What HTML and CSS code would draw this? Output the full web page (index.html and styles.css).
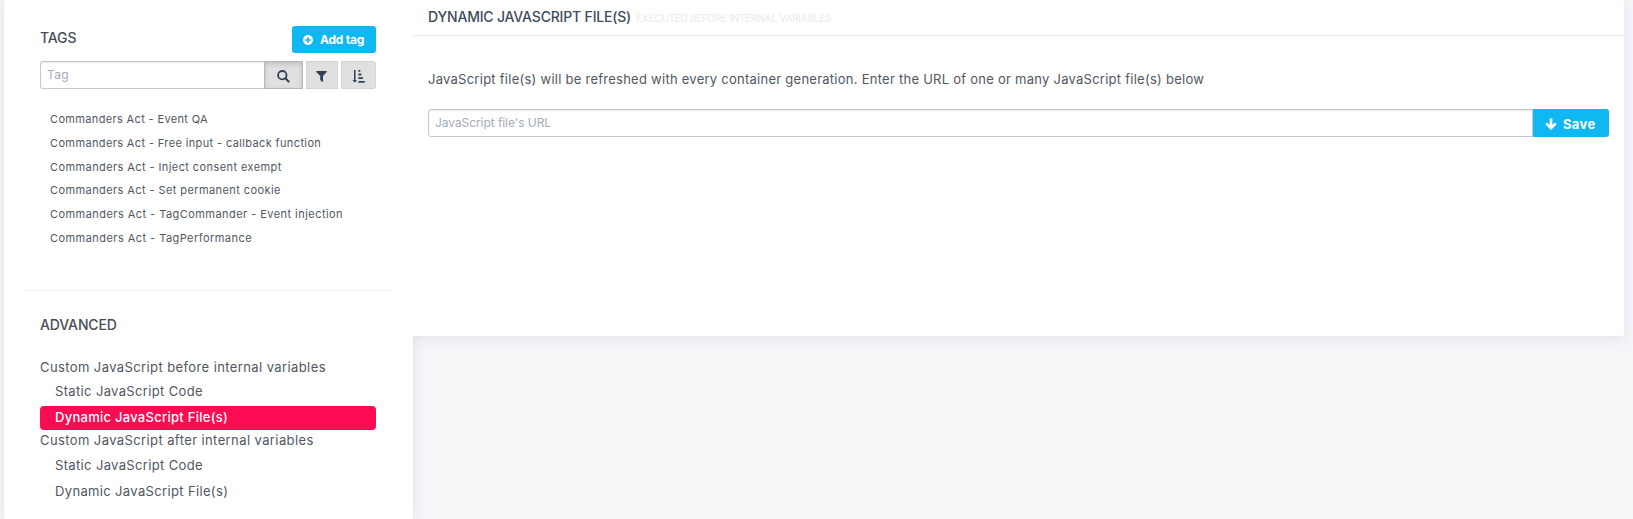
FILE: index.html
```
<!DOCTYPE html>
<html lang="en">
<head>
<meta charset="utf-8">
<title>Dynamic JavaScript File(s)</title>
<link rel="stylesheet" href="styles.css">
</head>
<body>
<div class="layout">
  <aside class="sidebar">
    <section class="tags">
      <div class="tags-head">
        <h2 class="heading">TAGS</h2>
        <button class="btn add-btn">
          <svg class="add-icon" viewBox="0 0 10 10" width="10" height="10"><circle cx="5" cy="5" r="5" fill="#fff"/><path d="M5 2.2v5.6M2.2 5h5.6" stroke="#10b8f2" stroke-width="1.7"/></svg>
          <span>Add tag</span>
        </button>
      </div>
      <div class="search-row">
        <div class="field tag-field"><span>Tag</span></div>
        <button class="tool tool-active">
          <svg viewBox="0 0 13 13" width="13" height="13" fill="none" stroke="#2f4259"><circle cx="5.3" cy="5.2" r="4.2" stroke-width="1.8"/><path d="M8.4 8.3l3.2 3.3" stroke-width="2.1" stroke-linecap="round"/></svg>
        </button>
        <button class="tool tool-filter">
          <svg viewBox="0 0 11 11" width="11" height="11" fill="#2f4259"><path d="M.6 0h9.8q.7.3.3 1L7 4.9v5.4q-.2.8-.9.4L4.2 9V4.9L.3 1Q-.1.3.6 0z"/></svg>
        </button>
        <button class="tool tool-sort">
          <svg viewBox="0 0 13 13" width="13" height="13" fill="#2f4259"><path d="M2 0h1.5v10H5L2.750 12.8.5 10H2zM6.400 0h1.900v1.700H6.400zM6.400 3.600h3v1.800h-3zM6.400 7.300h4.600v1.800H6.400zM6.400 11h6.400v1.800H6.400z"/></svg>
        </button>
      </div>
      <ul class="tag-list">
        <li class="l1">Commanders Act - Event QA</li>
        <li class="l2">Commanders Act - Free input - callback function</li>
        <li class="l3">Commanders Act - Inject consent exempt</li>
        <li class="l3">Commanders Act - Set permanent cookie</li>
        <li class="l4">Commanders Act - TagCommander - Event injection</li>
        <li class="l4">Commanders Act - TagPerformance</li>
      </ul>
    </section>
    <section class="advanced">
      <h2 class="heading">ADVANCED</h2>
      <nav class="tree">
        <div class="group">Custom JavaScript before internal variables</div>
        <div class="leaf">Static JavaScript Code</div>
        <div class="leaf selected">Dynamic JavaScript File(s)</div>
        <div class="group after">Custom JavaScript after internal variables</div>
        <div class="leaf">Static JavaScript Code</div>
        <div class="leaf last">Dynamic JavaScript File(s)</div>
      </nav>
    </section>
  </aside>
  <main class="panel">
    <header class="panel-head">
      <h1 class="title">DYNAMIC JAVASCRIPT FILE(S)</h1>
      <small class="subtitle">EXECUTED BEFORE INTERNAL VARIABLES</small>
    </header>
    <p class="intro">JavaScript file(s) will be refreshed with every container generation. Enter the URL of one or many JavaScript file(s) below</p>
    <div class="url-row">
      <div class="field url-field"><span>JavaScript file's URL</span></div>
      <button class="btn save-btn">
        <svg viewBox="0 0 12 12" width="12" height="12" fill="none" stroke="#fff" stroke-width="2.7"><path d="M6 .5v9.500M1.200 5.400L6 10.100l4.800-4.700"/></svg>
        <span>Save</span>
      </button>
    </div>
  </main>
</div>
</body>
</html>
```
FILE: styles.css
```
* { box-sizing: border-box; }
body {
  margin: 0;
  height: 519px;
  overflow: hidden;
  background: #f6f6f9;
  color: #50575f;
  font: 400 13px/20px Inter, "Open Sans", sans-serif;
  white-space: nowrap;
}
h1, h2, p, ul { margin: 0; padding: 0; }
button { border: 0; padding: 0; font: inherit; }
svg { display: block; flex: none; }

.layout {
  display: flex;
  align-items: flex-start;
  height: 519px;
  padding: 0 9px 0 4px;
}
.sidebar {
  flex: none;
  width: 409px;
  height: 519px;
  padding: 0 21px 0 20px;
  background: #fff;
  box-shadow: 0 0 12px rgba(82, 92, 140, .14);
}
.heading {
  font-size: 14px;
  font-weight: 500;
  line-height: 20px;
  letter-spacing: -.12px;
  color: #464d55;
}

.tags {
  height: 291px;
  padding: 26px 16px 0;
  border-bottom: 1px solid #f1f1f3;
}
.tags-head {
  display: flex;
  justify-content: space-between;
  height: 27px;
}
.tags-head .heading { padding-top: 2px; }
.btn {
  display: flex;
  align-items: center;
  background: #10b8f2;
  color: #fff;
  font-weight: 700;
}
.add-btn {
  width: 84px;
  padding-left: 11px;
  gap: 7px;
  border-radius: 3px;
  font-size: 12px;
  letter-spacing: -.24px;
}
.search-row {
  display: flex;
  height: 28px;
  margin-top: 8px;
}
.field {
  display: flex;
  align-items: center;
  padding: 0 0 1px 6px;
  border: 1px solid #c6c7c9;
  border-radius: 3px 0 0 3px;
  box-shadow: inset 0 1px 1px rgba(0, 0, 0, .08);
  background: #fff;
  color: #a3abb9;
  font-size: 12px;
}
.tag-field { width: 224px; border-right: 0; letter-spacing: .3px; }
.tool {
  display: flex;
  align-items: center;
  justify-content: center;
  padding: 3px 1px 0 0;
  border: 1px solid #d4d4d4;
  background: #e0e0e0;
}
.tool-active {
  width: 39px;
  border-color: #b8b8b8;
  box-shadow: inset 0 2px 5px rgba(0, 0, 0, .15);
}
.tool-filter { width: 32px; margin-left: 3px; }
.tool-sort { width: 35px; margin-left: 3px; border-radius: 0 3px 3px 0; }

.tag-list {
  list-style: none;
  margin-top: 19px;
  padding-left: 10px;
  font-size: 11px;
  line-height: 23.8px;
}
.l1 { letter-spacing: .35px; }
.l2 { letter-spacing: .37px; }
.l3 { letter-spacing: .41px; }
.l4 { letter-spacing: .45px; }

.advanced { padding: 24px 16px 0; }
.tree { margin-top: 20px; }
.group { height: 24px; line-height: 24px; letter-spacing: .4px; }
.leaf {
  height: 24px;
  padding-left: 15px;
  line-height: 24px;
  letter-spacing: .35px;
}
.selected {
  margin-top: 3px;
  border-radius: 4px;
  background: #fa0b52;
  color: #fff;
  font-weight: 500;
  line-height: 23px;
  letter-spacing: .27px;
}
.after { height: 23px; line-height: 21px; }
.last { margin-top: 2px; }

.panel {
  flex: 1;
  height: 336px;
  background: #fff;
  border-radius: 0 3px 3px 0;
  box-shadow: 0 3px 14px rgba(82, 92, 140, .13);
  clip-path: inset(0 -20px -20px 0);
}
.panel-head {
  display: flex;
  align-items: baseline;
  gap: 5px;
  height: 36px;
  padding: 7px 0 0 15px;
  border-bottom: 1px solid #e9eaec;
}
.title {
  font-size: 14px;
  font-weight: 500;
  line-height: 20px;
  letter-spacing: -.18px;
  color: #3f4b5c;
}
.subtitle {
  font-size: 10px;
  font-weight: 500;
  letter-spacing: -.27px;
  color: #ededef;
}
.intro {
  margin: 33px 0 0 15px;
  line-height: 20px;
  letter-spacing: .255px;
}
.url-row {
  display: flex;
  height: 28px;
  margin: 20px 15px 0;
}
.url-field { flex: 1; letter-spacing: -.07px; }
.save-btn {
  width: 76px;
  padding: 2px 0 0 12px;
  gap: 6px;
  border-radius: 0 3px 3px 0;
  font-size: 13px;
  letter-spacing: .35px;
}
```
